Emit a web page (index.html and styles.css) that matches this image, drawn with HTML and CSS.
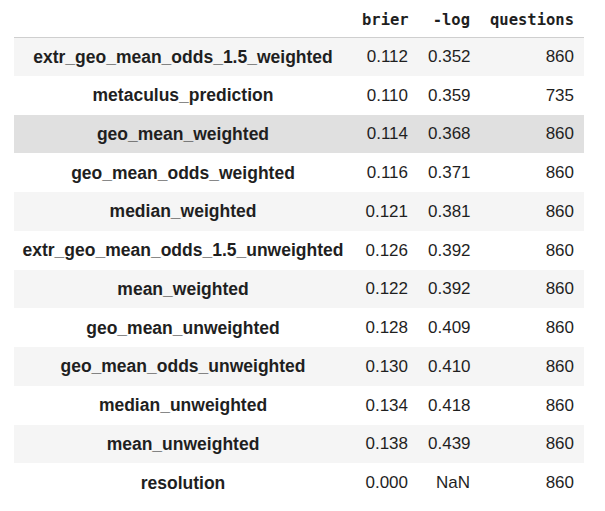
FILE: index.html
```html
<!DOCTYPE html>
<html>
<head>
<meta charset="utf-8">
<link rel="stylesheet" href="styles.css">
</head>
<body>
<div class="wrap">
<table class="dataframe">
  <colgroup>
    <col class="c-label"><col class="c-brier"><col class="c-log"><col class="c-q">
  </colgroup>
  <thead>
    <tr><th></th><th>brier</th><th>-log</th><th>questions</th></tr>
  </thead>
  <tbody>
    <tr><th>extr_geo_mean_odds_1.5_weighted</th><td>0.112</td><td>0.352</td><td>860</td></tr>
    <tr><th>metaculus_prediction</th><td>0.110</td><td>0.359</td><td>735</td></tr>
    <tr class="hover"><th>geo_mean_weighted</th><td>0.114</td><td>0.368</td><td>860</td></tr>
    <tr><th>geo_mean_odds_weighted</th><td>0.116</td><td>0.371</td><td>860</td></tr>
    <tr><th>median_weighted</th><td>0.121</td><td>0.381</td><td>860</td></tr>
    <tr><th>extr_geo_mean_odds_1.5_unweighted</th><td>0.126</td><td>0.392</td><td>860</td></tr>
    <tr><th>mean_weighted</th><td>0.122</td><td>0.392</td><td>860</td></tr>
    <tr><th>geo_mean_unweighted</th><td>0.128</td><td>0.409</td><td>860</td></tr>
    <tr><th>geo_mean_odds_unweighted</th><td>0.130</td><td>0.410</td><td>860</td></tr>
    <tr><th>median_unweighted</th><td>0.134</td><td>0.418</td><td>860</td></tr>
    <tr><th>mean_unweighted</th><td>0.138</td><td>0.439</td><td>860</td></tr>
    <tr><th>resolution</th><td>0.000</td><td>NaN</td><td>860</td></tr>
  </tbody>
</table>
</div>
</body>
</html>
```
FILE: styles.css
```css
html, body {
  margin: 0;
  padding: 0;
  background: #ffffff;
}
.wrap {
  padding: 0 0 0 14px;
}
.dataframe {
  border-collapse: collapse;
  table-layout: fixed;
  width: 570px;
  font-family: "Liberation Sans", Arial, sans-serif;
  font-size: 17px;
  color: #1f1f1f;
}
.c-label { width: 338px; }
.c-brier { width: 66px; }
.c-log { width: 62px; }
.c-q { width: 104px; }

.dataframe thead th {
  font-family: "DejaVu Sans Mono", "Liberation Mono", monospace;
  font-weight: bold;
  font-size: 15.5px;
  text-align: right;
  height: 37px;
  padding: 3px 10px 0;
  box-sizing: border-box;
  vertical-align: middle;
  border-bottom: 1px solid #cfcfcf;
  color: #1f1f1f;
}
.dataframe tbody th {
  font-weight: bold;
  font-size: 17.5px;
  text-align: center;
  padding: 1px 4px 0;
  white-space: nowrap;
}
.dataframe tbody td {
  text-align: right;
  padding: 1px 10px 0;
  white-space: nowrap;
}
.dataframe tbody tr {
  height: 38.75px;
}
.dataframe tbody tr:nth-child(odd) {
  background: #f5f5f5;
}
.dataframe tbody tr.hover {
  background: #e0e0e0;
}
```
